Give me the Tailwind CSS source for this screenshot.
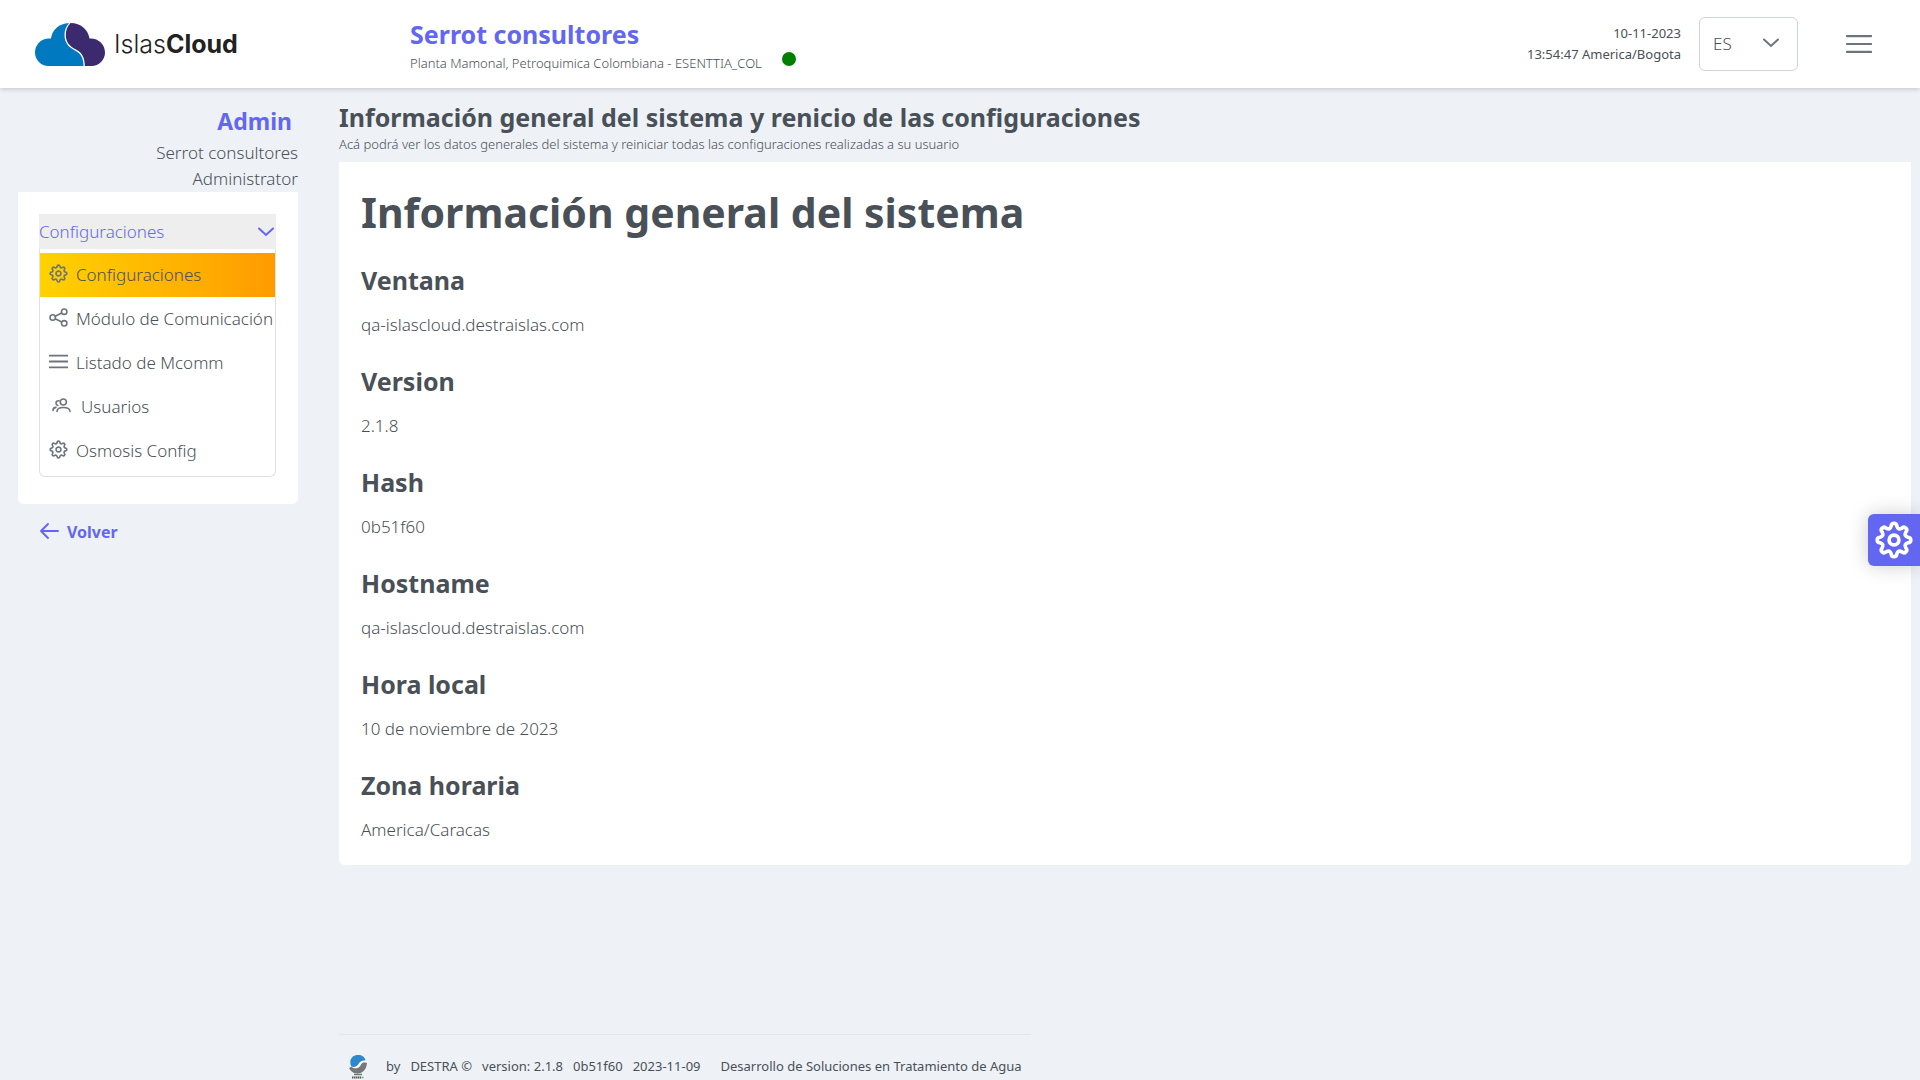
<!DOCTYPE html>
<html lang="es">
<head>
<meta charset="utf-8">
<meta name="viewport" content="width=device-width, initial-scale=1">
<title>IslasCloud - Configuraciones</title>
<script src="https://cdn.jsdelivr.net/npm/@tailwindcss/browser@4"></script>
</head>
<body class="relative flex min-h-screen flex-col bg-[#eef2f7] font-['Noto_Sans',sans-serif] text-[17px] font-light text-[#495057]">

<!-- Shared icon shapes -->
<svg class="hidden" aria-hidden="true">
  <symbol id="cog" viewBox="-12 -12 24 24">
    <path d="M8.83 1.76Q6.1 2.53 7.48 5C9.05 6.79 6.79 9.05 5 7.48Q2.53 6.1 1.76 8.83C1.6 11.2-1.6 11.2-1.76 8.83Q-2.53 6.1-5 7.48C-6.79 9.05-9.05 6.79-7.48 5Q-6.1 2.53-8.83 1.76C-11.2 1.6-11.2-1.6-8.83-1.76Q-6.1-2.53-7.48-5C-9.05-6.79-6.79-9.05-5-7.48Q-2.53-6.1-1.76-8.83C-1.6-11.2 1.6-11.2 1.76-8.83Q2.53-6.1 5-7.48C6.79-9.05 9.05-6.79 7.48-5Q6.1-2.53 8.83-1.76C11.2-1.6 11.2 1.6 8.83 1.76Z"/>
    <circle r="3.1"/>
  </symbol>
  <symbol id="chevron" viewBox="0 0 18 18"><path d="M2 5.500L9 12L16 5.500"/></symbol>
  <symbol id="bars" viewBox="0 0 18 18"><path d="M.6 3.500H17.400M.6 9H17.400M.6 14.500H17.400"/></symbol>
</svg>

<header class="flex h-[88px] shrink-0 items-center bg-white pl-[35px] pr-12 shadow-[0_1px_5px_rgba(0,0,0,0.2)]">
  <a href="#" class="flex w-[375px] shrink-0 items-center gap-[9px]" aria-label="IslasCloud">
    <svg class="h-[43px] w-[70px]" viewBox="0 0 70 43" aria-hidden="true">
      <path fill="#0079c1" d="M34 0C24 .4 17 7 16 15.500C7 14.500 0 21 0 29.500C0 37 6 43 13.500 43H48.500C48.500 37 47 31 40 27.500C33 24 29.500 19 29.500 12C29.500 7 31 3.500 34 0Z"/>
      <path fill="#3b2a6e" d="M35.500 0C46 0 53 6.500 54.500 15.500C63.500 15 70 21.500 70 29.500C70 37 64 43 56.500 43H49.800C49.800 36 48 30 41 26.500C34 23 30.800 18.500 30.800 12C30.800 7 32.500 3 35.500 0Z"/>
    </svg>
    <span class="font-['Inter',sans-serif] text-[25px] leading-[42px] text-[#222]">Islas<b class="font-bold">Cloud</b></span>
  </a>
  <div class="flex flex-1 flex-col pt-2">
    <h2 class="text-[25px] leading-[34px] font-bold text-[#6366f1]">Serrot consultores</h2>
    <div class="flex items-center gap-5 pb-1">
      <p class="text-[13px] leading-6">Planta Mamonal, Petroquimica Colombiana - ESENTTIA_COL</p>
      <span class="mb-2 size-[14px] rounded-full bg-[#008000]"></span>
    </div>
  </div>
  <div class="mr-[18px] text-right text-[13px] leading-[21px] font-normal">
    <p>10-11-2023</p>
    <p>13:54:47 America/Bogota</p>
  </div>
  <div class="relative mr-12 h-[54px] w-[99px]">
    <select aria-label="Idioma" class="h-full w-full appearance-none rounded-md border border-[#ced4da] bg-white pl-[13px] text-[17px]"><option>ES</option></select>
    <svg class="pointer-events-none absolute top-[17px] right-[18px] size-[18px] fill-none stroke-[#6c757d] stroke-2 [stroke-linecap:round]" aria-hidden="true"><use href="#chevron"/></svg>
  </div>
  <button type="button" aria-label="Menú" class="h-[26px] w-[26px]">
    <svg class="size-full fill-none stroke-[#6c757d] stroke-[1.5] [stroke-linecap:round]" aria-hidden="true"><use href="#bars"/></svg>
  </button>
</header>

<div class="flex flex-1 gap-[41px] pl-[18px] pr-[9px]">
  <aside class="w-[280px] shrink-0 pt-[14px]">
    <div class="text-right">
      <h3 class="pr-[6px] text-[23px] leading-[38px] font-bold text-[#6366f1]">Admin</h3>
      <p class="leading-[26px]">Serrot consultores</p>
      <p class="leading-[26px]">Administrator</p>
    </div>
    <nav class="rounded-b-md bg-white pt-[22px] pr-[22px] pb-[27px] pl-[21px]">
      <button type="button" class="flex h-[35px] w-full items-center justify-between bg-[#eee] pr-px text-[#6366f1]">
        <span>Configuraciones</span>
        <svg class="size-[18px] fill-none stroke-current stroke-2 [stroke-linecap:round]" aria-hidden="true"><use href="#chevron"/></svg>
      </button>
      <ul class="rounded-b-md border border-t-0 border-[#dee2e6] pt-1 pb-[3px]">
        <li><a href="#" class="flex h-11 items-center gap-2 bg-linear-to-r from-[#ffd200] to-[#ff9b00] pl-[9px] whitespace-nowrap">
          <svg class="mb-[3px] size-[19px] shrink-0 fill-none stroke-[#6c757d] stroke-[2.1]" aria-hidden="true"><use href="#cog"/></svg>Configuraciones</a></li>
        <li><a href="#" class="flex h-11 items-center gap-2 pl-[9px] whitespace-nowrap">
          <svg class="mb-[3px] size-[19px] shrink-0 fill-none stroke-[#6c757d] stroke-[1.6]" viewBox="0 0 19 19" aria-hidden="true"><circle cx="3.700" cy="9.500" r="2.700"/><circle cx="15.200" cy="3.700" r="2.700"/><circle cx="15.200" cy="15.300" r="2.700"/><path d="M6.200 8.300L12.700 5M6.200 10.700L12.700 14"/></svg>Módulo de Comunicación</a></li>
        <li><a href="#" class="flex h-11 items-center gap-2 pl-[9px] whitespace-nowrap">
          <svg class="mb-[3px] size-[19px] shrink-0 fill-none stroke-[#6c757d] stroke-[1.7] [stroke-linecap:round]" aria-hidden="true"><use href="#bars"/></svg>Listado de Mcomm</a></li>
        <li><a href="#" class="flex h-11 items-center gap-[10px] pl-3 whitespace-nowrap">
          <svg class="mb-[3px] size-[19px] shrink-0 fill-none stroke-[#6c757d] stroke-[1.6] [stroke-linecap:round]" viewBox="0 0 19 19" aria-hidden="true"><circle cx="11.300" cy="6" r="3"/><path d="M5 15.500C5 12.500 8 11.500 11.300 11.500S18 12.500 18 15.500M7 4.800C5.500 4.500 4 5.500 4 7.200C4 8.400 4.800 9.200 5.800 9.400M1 14.500C1 12.500 2 11.500 4 11.400"/></svg>Usuarios</a></li>
        <li><a href="#" class="flex h-11 items-center gap-2 pl-[9px] whitespace-nowrap">
          <svg class="mb-[3px] size-[19px] shrink-0 fill-none stroke-[#6c757d] stroke-[2.1]" aria-hidden="true"><use href="#cog"/></svg>Osmosis Config</a></li>
      </ul>
    </nav>
    <a href="#" class="mt-[14px] ml-[21px] inline-flex items-center gap-2 text-[16px] leading-[28px] font-bold text-[#6366f1]">
      <svg class="mb-[3px] size-[20px] fill-none stroke-current stroke-[1.9] [stroke-linecap:round] [stroke-linejoin:round]" viewBox="0 0 20 20" aria-hidden="true"><path d="M19 10H2M9 3L2 10L9 17"/></svg>Volver</a>
  </aside>

  <div class="flex min-w-0 flex-1 flex-col pt-3">
    <main>
      <h2 class="text-[25px] leading-[34px] font-bold">Información general del sistema y renicio de las configuraciones</h2>
      <p class="pb-[7px] text-[13px] leading-[21px]">Acá podrá ver los datos generales del sistema y reiniciar todas las configuraciones realizadas a su usuario</p>
      <section class="rounded-b-md bg-white px-[22px] pt-[22px] pb-[18px]">
        <h1 class="mb-[21px] text-[41px] leading-[56px] font-bold">Información general del sistema</h1>
        <dl class="flex flex-col gap-5">
          <div><dt class="text-[25px] leading-[38px] font-bold">Ventana</dt><dd class="pt-[9px] leading-[34px]">qa-islascloud.destraislas.com</dd></div>
          <div><dt class="text-[25px] leading-[38px] font-bold">Version</dt><dd class="pt-[9px] leading-[34px]">2.1.8</dd></div>
          <div><dt class="text-[25px] leading-[38px] font-bold">Hash</dt><dd class="pt-[9px] leading-[34px]">0b51f60</dd></div>
          <div><dt class="text-[25px] leading-[38px] font-bold">Hostname</dt><dd class="pt-[9px] leading-[34px]">qa-islascloud.destraislas.com</dd></div>
          <div><dt class="text-[25px] leading-[38px] font-bold">Hora local</dt><dd class="pt-[9px] leading-[34px]">10 de noviembre de 2023</dd></div>
          <div><dt class="text-[25px] leading-[38px] font-bold">Zona horaria</dt><dd class="pt-[9px] leading-[34px]">America/Caracas</dd></div>
        </dl>
      </section>
    </main>
    <footer class="mt-auto flex h-[46px] items-center self-start border-t border-[#dfe7ea] pt-[18px] pr-[9px] pl-[10px] text-[13px] font-normal">
      <svg class="mr-[19px] h-[24px] w-[18px]" viewBox="0 0 18 24" aria-hidden="true">
        <path fill="#777" d="M18 8C17.500 14 14 18.500 8.500 18.500C4.500 18.500 1.500 16.500 0 13L3 11.500C6 14 9.500 14 11.500 10.500C13 7.500 15 6.500 18 8Z"/>
        <path fill="#fff" d="M3 12.500C7 14.500 10 12.500 11.500 9.500C12.800 7 14.500 6.300 17 7.500L16.500 5L9 7Z"/>
        <path fill="#2f88cc" d="M2 11C-.5 4 4 0 9 0C13 0 16 2 16.500 5.500C13 5 11 6.500 9.500 9C7.500 12.300 4.500 12.800 2 11Z"/>
        <path stroke="#777" stroke-width="1.500" d="M5 19.500H13"/><path stroke="#555" stroke-width="2" stroke-dasharray="1.500 .5" d="M3 22.500H12"/><path stroke="#4ab56a" stroke-width="1.500" d="M12.500 22.500H14.500"/>
      </svg>
      <span class="mr-[10px]">by</span><span class="mr-[10px]">DESTRA ©</span><span class="mr-[10px]">version: 2.1.8</span><span class="mr-[10px]">0b51f60</span><span class="mr-5">2023-11-09</span><span>Desarrollo de Soluciones en Tratamiento de Agua</span>
    </footer>
  </div>
</div>

<button type="button" aria-label="Ajustes" class="fixed top-1/2 right-0 flex size-[52px] -translate-y-1/2 items-center justify-center rounded-l-md bg-[#6366f1] text-white shadow-[0_0_20px_rgba(0,0,0,0.2)]">
  <svg class="size-[38px] fill-none stroke-current stroke-[2.3]" aria-hidden="true"><use href="#cog"/></svg>
</button>
</body>
</html>
